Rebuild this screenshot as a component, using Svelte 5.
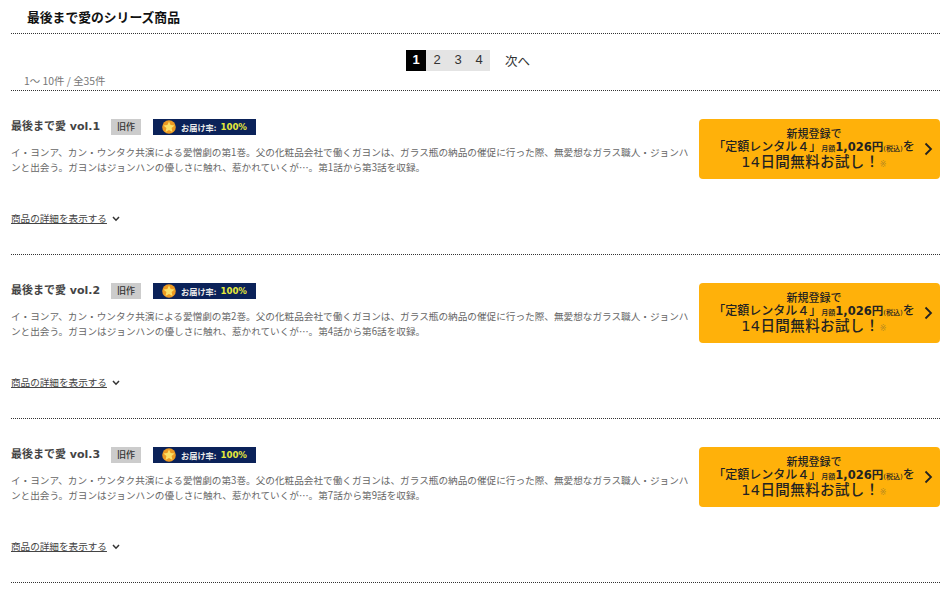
<script>
	const items = [
		{ vol: 1, from: 1, to: 3 },
		{ vol: 2, from: 4, to: 6 },
		{ vol: 3, from: 7, to: 9 }
	]
	const pages = [1, 2, 3, 4]
</script>

<div class="page">
	<h2 class="title">最後まで愛のシリーズ商品</h2>

	<div class="pager-area">
		<div class="pager">
			<div class="pages">
				{#each pages as p}
					<span class="num" class:active={p === 1}>{p}</span>
				{/each}
			</div>
			<span class="next">次へ</span>
		</div>
		<div class="count">1～ 10件 / 全35件</div>
	</div>

	{#each items as item}
		<section class="item">
			<div class="body">
				<div class="head">
					<span class="name">最後まで愛 vol.{item.vol}</span>
					<span class="old">旧作</span>
					<span class="rate">
						<svg width="14" height="14" viewBox="0 0 14 14">
							<circle cx="7" cy="7" r="6.8" fill="#ec9a22" />
							<path d="M7 1.4 8.6 5 12.6 5.4 9.6 8 10.5 12 7 10 3.5 12 4.4 8 1.4 5.4 5.4 5Z" fill="#fbe067" />
						</svg>
						<span class="rate-label">お届け率:</span>
						<span class="rate-value">100%</span>
					</span>
				</div>
				<p class="desc">イ・ヨンア、カン・ウンタク共演による愛憎劇の第{item.vol}巻。父の化粧品会社で働くガヨンは、ガラス瓶の納品の催促に行った際、無愛想なガラス職人・ジョンハンと出会う。ガヨンはジョンハンの優しさに触れ、惹かれていくが…。第{item.from}話から第{item.to}話を収録。</p>
				<div class="detail">
					<span class="detail-link">商品の詳細を表示する</span>
					<svg width="8" height="6" viewBox="0 0 8 6">
						<path d="M1 1 4 4.2 7 1" fill="none" stroke="#333" stroke-width="1.5" />
					</svg>
				</div>
			</div>
			<div class="cta">
				<div class="cta-text">
					<div class="l1">新規登録で</div>
					<div class="l2">「定額レンタル４」<small>月額</small><b>1,026円</b><small class="tax">(税込)</small>を</div>
					<div class="l3">14日間無料お試し！<small>※</small></div>
				</div>
				<svg class="arrow" width="9" height="14" viewBox="0 0 9 14">
					<path d="M1.5 1.5 7 7 1.5 12.5" fill="none" stroke="#222" stroke-width="1.8" />
				</svg>
			</div>
		</section>
	{/each}
</div>

<style>
	:global(body) {
		margin: 0;
		background: #fff;
	}

	.page {
		width: 929px;
		margin-left: 11px;
		font-family: "Noto Sans CJK JP", "Liberation Sans", sans-serif;
		color: #333;
	}

	.title {
		margin: 0;
		height: 34px;
		padding: 8px 0 0 16px;
		box-sizing: border-box;
		font-size: 12.8px;
		line-height: 18px;
		font-weight: 700;
		color: #111;
		border-bottom: 1px dotted #333;
	}

	.pager-area {
		height: 56px;
		border-bottom: 1px dotted #333;
		display: flex;
		flex-direction: column;
	}

	.pager {
		display: flex;
		align-items: center;
		margin: 16px 0 0 395px;
		height: 21px;
	}

	.pages {
		display: flex;
		background: #e4e4e4;
	}

	.num {
		width: 20px;
		margin-right: 1px;
		height: 21px;
		line-height: 20px;
		text-align: center;
		font-family: "Liberation Sans", sans-serif;
		font-size: 13px;
		color: #333;
	}

	.num.active {
		background: #000;
		color: #fff;
		font-weight: 700;
	}

	.next {
		margin-left: 15px;
		font-size: 12.5px;
		color: #333;
	}

	.count {
		margin: 3px 0 0 13px;
		font-size: 10.4px;
		line-height: 14px;
		color: #777;
	}

	.item {
		height: 163px;
		border-bottom: 1px dotted #333;
		display: flex;
		align-items: flex-start;
	}

	.body {
		width: 688px;
		padding-top: 28px;
	}

	.head {
		display: flex;
		align-items: center;
		height: 16px;
	}

	.name {
		width: 100px;
		font-family: "DejaVu Sans", "Noto Sans CJK JP", sans-serif;
		font-size: 11px;
		font-weight: 700;
		color: #444;
		white-space: nowrap;
		margin-top: -4px;
	}

	.old {
		width: 30px;
		height: 16px;
		line-height: 16px;
		text-align: center;
		background: #ccc;
		font-size: 9px;
		font-weight: 500;
		color: #333;
	}

	.rate {
		margin-left: 12px;
		width: 103px;
		height: 16px;
		background: #0b2259;
		display: flex;
		align-items: center;
		padding-left: 9px;
		box-sizing: border-box;
		font-size: 8.2px;
		font-weight: 700;
		white-space: nowrap;
	}

	.rate-label {
		margin-left: 5px;
		color: #e8e8e8;
	}

	.rate-value {
		margin-left: 4px;
		color: #e6e83a;
		font-family: "DejaVu Sans", sans-serif;
		font-size: 8.6px;
	}

	.desc {
		margin: 10px 10px 0 0;
		font-size: 9.65px;
		line-height: 15px;
		color: #666;
	}

	.detail {
		margin-top: 36px;
		display: flex;
		align-items: center;
		gap: 5px;
		font-size: 9.6px;
		line-height: 14px;
		color: #444;
	}

	.detail svg {
		margin-top: 2px;
	}

	.detail-link {
		text-decoration: underline;
	}

	.cta {
		margin-top: 28px;
		width: 241px;
		height: 60px;
		border-radius: 4px;
		background: #ffb10a;
		display: flex;
		align-items: center;
		position: relative;
		color: #222;
	}

	.cta-text {
		width: 230px;
		padding-top: 5px;
		text-align: center;
		font-family: "DejaVu Sans", "Noto Sans CJK JP", sans-serif;
		font-weight: 500;
		white-space: nowrap;
	}

	.l1 {
		font-size: 11px;
		line-height: 11px;
	}

	.l2 {
		font-size: 12px;
		line-height: 14px;
	}

	.l2 small {
		font-size: 7px;
	}

	.l2 b {
		font-weight: 700;
		font-size: 11.5px;
	}

	.l3 {
		margin-top: -3px;
		font-size: 14.5px;
		line-height: 18px;
		letter-spacing: 0.4px;
	}

	.l3 small {
		font-size: 8px;
		color: #b88a20;
	}

	.arrow {
		position: absolute;
		right: 7px;
		top: 23px;
	}
</style>
